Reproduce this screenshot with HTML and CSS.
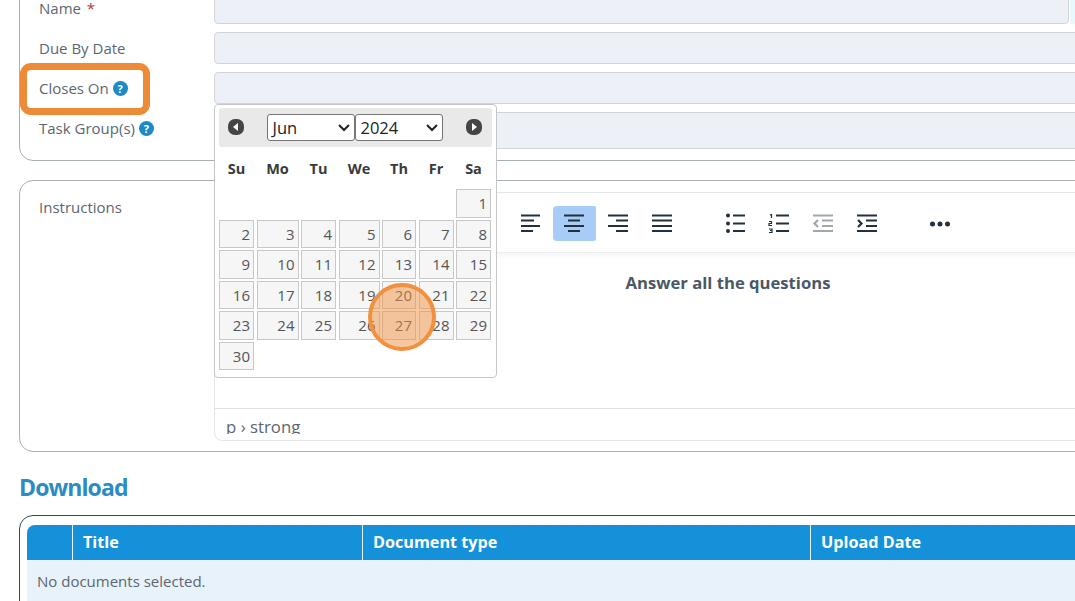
FILE: index.html
```html
<!DOCTYPE html>
<html lang="en">
<head>
<meta charset="utf-8">
<title>Task</title>
<link rel="stylesheet" href="styles.css">
</head>
<body>
<main class="page">
  <section class="panel form-panel">
    <div class="row row-name">
      <label class="label">Name <span class="req">*</span></label>
      <div class="input input-name"></div>
      <div class="input-side"></div>
    </div>
    <div class="row">
      <label class="label">Due By Date</label>
      <div class="input"></div>
    </div>
    <div class="row">
      <label class="label">Closes On <span class="help">?</span></label>
      <div class="input"></div>
    </div>
    <div class="row row-tall">
      <label class="label">Task Group(s) <span class="help">?</span></label>
      <div class="input input-tall"></div>
    </div>
  </section>

  <section class="panel editor-panel">
    <div class="label label-top">Instructions</div>
    <div class="editor">
      <div class="toolbar">
        <span class="tool"><svg width="22" height="18" viewBox="0 0 22 18"><path d="M2 .5h19M2 5.500h13M2 11h19M2 16h12"/></svg></span>
        <span class="tool tool-active"><svg width="22" height="18" viewBox="0 0 22 18"><path d="M1 .5h20M5 5.500h12M1 11h20M5 16h12"/></svg></span>
        <span class="tool"><svg width="22" height="18" viewBox="0 0 22 18"><path d="M1 .5h20M9 5.500h12M1 11h20M9 16h12"/></svg></span>
        <span class="tool"><svg width="22" height="18" viewBox="0 0 22 18"><path d="M1 .5h20M1 5.500h20M1 11h20M1 16h20"/></svg></span>
        <span class="tool tool-sep"><svg width="22" height="18" viewBox="0 0 22 18"><path d="M9 .5h12M9 8.500h12M9 16h12"/><circle class="fill" cx="4" cy=".5" r="2"/><circle class="fill" cx="4" cy="8.500" r="2"/><circle class="fill" cx="4" cy="16" r="2"/></svg></span>
        <span class="tool"><svg width="22" height="18" viewBox="0 0 22 18"><path d="M8 .5h13M8 8.500h13M8 16h13"/><path class="thin" d="M2 0l1.500-.5v3.500M1 6.500h2.500v2H1v2h3M1 14h3v1.500H2h2v2H1"/></svg></span>
        <span class="tool tool-dim"><svg width="22" height="18" viewBox="0 0 22 18"><path d="M1 .5h20M10 5.500h11M10 11h11M1 16h20"/><path d="M6 5L2.500 8.500 6 12"/></svg></span>
        <span class="tool"><svg width="22" height="18" viewBox="0 0 22 18"><path d="M1 .5h20M10 5.500h11M10 11h11M1 16h20"/><path d="M2 5l3.500 3.500L2 12"/></svg></span>
        <span class="tool tool-sep2"><svg width="22" height="18" viewBox="0 0 22 18"><circle class="fill" cx="3.500" cy="9" r="2.500"/><circle class="fill" cx="11" cy="9" r="2.500"/><circle class="fill" cx="18.500" cy="9" r="2.500"/></svg></span>
      </div>
      <div class="content"><strong>Answer all the questions</strong></div>
      <div class="status"><span class="path">p › strong</span></div>
    </div>
  </section>

  <h2 class="heading">Download</h2>

  <section class="panel table-panel">
    <div class="thead">
      <div class="th th-check"></div>
      <div class="th th-title">Title</div>
      <div class="th th-type">Document type</div>
      <div class="th th-date">Upload Date</div>
    </div>
    <div class="tbody">No documents selected.</div>
  </section>

  <div class="picker">
    <div class="picker-head">
      <svg class="nav nav-prev" width="18" height="18" viewBox="0 0 18 18"><rect x="1" y="1" width="16" height="16" rx="7" class="nav-bg"/><path d="M11 5v8L6 9z" class="nav-arrow"/></svg>
      <div class="selects">
        <span class="select select-month">Jun<svg width="14" height="9" viewBox="0 0 14 9"><path d="M2 2l5 5 5-5"/></svg></span>
        <span class="select">2024<svg width="14" height="9" viewBox="0 0 14 9"><path d="M2 2l5 5 5-5"/></svg></span>
      </div>
      <svg class="nav nav-next" width="18" height="18" viewBox="0 0 18 18"><rect x="1" y="1" width="16" height="16" rx="7" class="nav-bg"/><path d="M7 5v8l5-4z" class="nav-arrow"/></svg>
    </div>
    <div class="cal">
      <b>Su</b><b>Mo</b><b>Tu</b><b>We</b><b>Th</b><b>Fr</b><b>Sa</b>
      <i></i><i></i><i></i><i></i><i></i><i></i><a>1</a>
      <a>2</a><a>3</a><a>4</a><a>5</a><a>6</a><a>7</a><a>8</a>
      <a>9</a><a>10</a><a>11</a><a>12</a><a>13</a><a>14</a><a>15</a>
      <a>16</a><a>17</a><a>18</a><a>19</a><a>20</a><a>21</a><a>22</a>
      <a>23</a><a>24</a><a>25</a><a>26</a><a>27</a><a>28</a><a>29</a>
      <a>30</a>
    </div>
  </div>

  <div class="mark-box"></div>
  <div class="mark-circle"></div>
</main>
</body>
</html>
```
FILE: styles.css
```css
html, body {
  margin: 0;
  padding: 0;
  width: 1075px;
  height: 601px;
  overflow: hidden;
  background: #fff;
}
body {
  font-family: "Open Sans", "Liberation Sans", sans-serif;
  font-size: 15px;
  color: #5b6670;
}
.page {
  position: relative;
  width: 1075px;
  height: 601px;
  overflow: hidden;
  padding-left: 19px;
  box-sizing: border-box;
}
.panel {
  width: 1120px;
  box-sizing: border-box;
  border: 1px solid #a9b1b5;
  border-radius: 14px;
  background: #fff;
}
.form-panel {
  margin-top: -25px;
  height: 186px;
  padding: 16px 0 0 19px;
}
.row {
  display: flex;
  height: 32px;
  margin-bottom: 8px;
  align-items: center;
}
.row-tall { height: 37px; align-items: flex-start; }
.row-tall .label { line-height: 32px; }
.label {
  width: 175px;
  flex: none;
  color: #5b6670;
}
.req { color: #b5333b; margin-left: 2px; }
.help {
  display: inline-block;
  width: 15px;
  height: 15px;
  border-radius: 50%;
  background: #1b8ac8;
  color: #fff;
  font-size: 11px;
  font-weight: 700;
  line-height: 15px;
  text-align: center;
  vertical-align: 1px;
}
.input {
  flex: none;
  width: 900px;
  height: 32px;
  box-sizing: border-box;
  background: #edf0f6;
  border: 1px solid #d0d4d8;
  border-radius: 4px;
}
.input-name { width: 855px; }
.input-side {
  flex: none;
  width: 20px;
  height: 32px;
  margin-left: 1px;
  background: #e9f8fb;
}
.input-tall { height: 37px; }

.editor-panel {
  margin-top: 19px;
  height: 272px;
  padding: 11px 0 0 19px;
  display: flex;
  align-items: flex-start;
}
.label-top { line-height: 30px; }
.editor {
  width: 900px;
  height: 249px;
  box-sizing: border-box;
  border: 1px solid #e4e6e8;
  border-radius: 8px;
  display: flex;
  flex-direction: column;
}
.toolbar {
  height: 60px;
  flex: none;
  box-sizing: border-box;
  padding: 13px 0 0 294px;
  border-bottom: 1px solid #eceeef;
  box-shadow: 0 3px 5px rgba(0, 0, 0, .04);
  display: flex;
  align-items: flex-start;
}
.tool {
  width: 44px;
  height: 35px;
  flex: none;
  box-sizing: border-box;
  padding-right: 2px;
  border-radius: 4px;
  display: flex;
  align-items: center;
  justify-content: center;
}
.tool svg { overflow: visible; }
.tool svg path {
  fill: none;
  stroke: #222f3e;
  stroke-width: 2.200;
}
.tool svg path.thin { stroke-width: 1.200; }
.tool svg .fill { fill: #222f3e; }
.tool-active {
  background: linear-gradient(#a6ccf7, #a6ccf7) no-repeat 0 0 / 43px 35px;
}
.tool-sep { margin-left: 29px; }
.tool-dim { opacity: .42; }
.tool-sep2 { margin-left: 29px; }
.content {
  flex: 1;
  padding-top: 18px;
  box-sizing: border-box;
  text-align: center;
  padding-left: 128px;
  font-size: 16.650px;
  line-height: 24px;
  color: #4a5866;
}
.status {
  height: 32px;
  flex: none;
  box-sizing: border-box;
  border-top: 1px solid #dfe1e3;
  padding: 8px 0 0 11px;
  font-size: 16.800px;
  line-height: 20px;
  overflow: hidden;
}
.path {
  display: block;
  height: 17px;
  overflow: hidden;
}

.heading {
  margin: 21px 0 14px;
  font-size: 23px;
  line-height: 28px;
  font-weight: 700;
  letter-spacing: -.9px;
  color: #2b8cc4;
}
.table-panel {
  border-color: #2c4a5c;
  height: 120px;
  padding: 9px 7px 0;
}
.thead {
  display: flex;
  height: 35px;
  background: #1591d9;
  border-radius: 8px 8px 0 0;
  color: #fff;
  font-size: 16.200px;
  font-weight: 700;
  line-height: 35px;
}
.th {
  box-sizing: border-box;
  padding-left: 10px;
  border-left: 1px solid #e8f2fa;
  flex: none;
}
.th-check { width: 45px; border-left: 0; }
.th-title { width: 290px; }
.th-type { width: 448px; }
.th-date { width: 300px; }
.tbody {
  height: 60px;
  background: #e8f2fa;
  padding: 11px 0 0 10px;
  box-sizing: border-box;
  line-height: 21px;
}

.picker {
  position: absolute;
  left: 214px;
  top: 104px;
  width: 283px;
  height: 274px;
  box-sizing: border-box;
  background: #fff;
  border: 1px solid #c4c7c9;
  border-radius: 4px;
  padding: 3px 4px;
}
.picker-head {
  height: 39px;
  background: #e9e9e9;
  border-radius: 3px;
  display: flex;
  align-items: center;
  justify-content: space-between;
  padding: 0 9px 0 8px;
}
.nav { flex: none; margin-top: -1px; }
.nav-bg { fill: #454545; }
.nav-arrow { fill: #fff; }
.selects { display: flex; margin-right: 1px; }
.select {
  width: 88px;
  height: 27px;
  box-sizing: border-box;
  border: 1px solid #767676;
  border-radius: 3px;
  background: #fff;
  color: #222;
  font-size: 16.500px;
  line-height: 25px;
  padding-left: 5px;
  display: flex;
  justify-content: space-between;
  align-items: center;
}
.select svg { margin-right: 3px; flex: none; }
.select svg path { fill: none; stroke: #222; stroke-width: 2; }
.cal {
  display: grid;
  grid-template-columns: 35px 42px 35px 41px 34px 35px 35px;
  grid-template-rows: 38px repeat(6, 28.500px);
  column-gap: 2.500px;
  row-gap: 2px;
  margin-top: 2px;
}
.cal b {
  text-align: center;
  font-size: 14.500px;
  line-height: 39px;
  color: #3a3a3a;
  font-weight: 700;
}
.cal a {
  box-sizing: border-box;
  border: 1px solid #c8c8c8;
  background: #f6f6f6;
  color: #555;
  text-align: right;
  padding-right: 3px;
  font-size: 15px;
  line-height: 27px;
}
.mark-box {
  position: absolute;
  left: 20px;
  top: 63px;
  width: 130px;
  height: 52px;
  box-sizing: border-box;
  border: 7px solid #ed8b36;
  border-radius: 11px;
}
.mark-circle {
  position: absolute;
  left: 368px;
  top: 283px;
  width: 68px;
  height: 68px;
  box-sizing: border-box;
  border: 4px solid #f0913f;
  border-radius: 50%;
  background: rgba(240, 145, 63, .5);
}
```
